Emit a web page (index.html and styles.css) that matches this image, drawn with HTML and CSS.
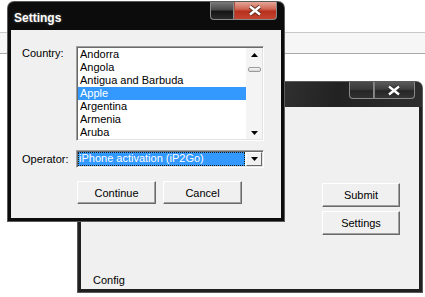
FILE: index.html
```html
<!DOCTYPE html>
<html lang="en">
<head>
  <meta charset="UTF-8">
  <title>Settings</title>
  <link rel="stylesheet" href="styles.css">
</head>
<body>
  <div class="desktop">
    <div class="band"></div>

    <!-- 后面的主窗口 -->
    <div class="window main-win">
      <div class="titlebar">
        <span class="title"></span>
        <div class="caption-btns">
          <span class="cap cap-min"></span>
          <span class="cap cap-close">
            <svg width="14" height="11" viewBox="0 0 14 11"><path d="M2 1.5 L12 9.5 M12 1.5 L2 9.5" stroke="#2a2a2a" stroke-width="4.2"/><path d="M2 1.5 L12 9.5 M12 1.5 L2 9.5" stroke="#fff" stroke-width="2.4"/></svg>
          </span>
        </div>
      </div>
      <div class="client main-client">
        <div class="side-btns">
          <button class="btn side-btn">Submit</button>
          <button class="btn side-btn">Settings</button>
        </div>
        <div class="status">Config</div>
      </div>
    </div>

    <!-- Settings 对话框 -->
    <div class="window settings-win">
      <div class="titlebar">
        <span class="title">Settings</span>
        <div class="caption-btns">
          <span class="cap cap-min"></span>
          <span class="cap cap-close red">
            <svg width="14" height="11" viewBox="0 0 14 11"><path d="M2 1.5 L12 9.5 M12 1.5 L2 9.5" stroke="#5a2a22" stroke-width="4.2"/><path d="M2 1.5 L12 9.5 M12 1.5 L2 9.5" stroke="#fff" stroke-width="2.4"/></svg>
          </span>
        </div>
      </div>
      <div class="client settings-client">
        <label class="field-label country-label">Country:</label>
        <div class="listbox">
          <ul class="list-items">
            <li>Andorra</li>
            <li>Angola</li>
            <li>Antigua and Barbuda</li>
            <li class="selected">Apple</li>
            <li>Argentina</li>
            <li>Armenia</li>
            <li>Aruba</li>
          </ul>
          <div class="scrollbar">
            <svg class="arrow" width="7" height="4" viewBox="0 0 7 4"><polygon points="0,4 7,4 3.5,0" fill="#000"/></svg>
            <span class="thumb"></span>
            <span class="track"></span>
            <svg class="arrow" width="7" height="4" viewBox="0 0 7 4"><polygon points="0,0 7,0 3.5,4" fill="#000"/></svg>
          </div>
        </div>

        <label class="field-label">Operator:</label>
        <div class="combo">
          <span class="combo-value">iPhone activation (iP2Go)</span>
          <span class="combo-drop">
            <svg width="7" height="4" viewBox="0 0 7 4"><polygon points="0,0 7,0 3.5,4" fill="#000"/></svg>
          </span>
        </div>

        <div class="actions">
          <button class="btn">Continue</button>
          <button class="btn">Cancel</button>
        </div>
      </div>
    </div>
  </div>
</body>
</html>
```

FILE: styles.css
```css
*{
  box-sizing: border-box;
}
body{
  margin: 0;
  background: #fff;
  font-family: "Liberation Sans", Arial, sans-serif;
  font-size: 11px;
  color: #000;
}
.desktop{
  position: relative;
  width: 425px;
  height: 297px;
  overflow: hidden;
}
.band{
  margin-top: 32px;
  height: 22px;
  background: #f6f6f6;
  border-top: 1px solid #c9c9c9;
  border-bottom: 1px solid #a9a9a9;
}

/* 窗口 */
.window{
  position: absolute;
  display: flex;
  flex-direction: column;
  background: #0c0c0c;
  padding: 0 3px 3px;
  border-radius: 6px 6px 0 0;
  box-shadow: 0 0 0 1px #5a5a5a;
}
.settings-win{
  left: 8px;
  top: 2px;
  width: 276px;
  height: 219px;
}
.main-win{
  left: 78px;
  top: 82px;
  width: 344px;
  height: 210px;
  background: #202020;
}
.titlebar{
  display: flex;
  justify-content: space-between;
  align-items: flex-start;
  height: 28px;
  flex: none;
}
.main-win .titlebar{
  height: 25px;
  margin: 0 -3px;
  padding: 0 3px;
  border-radius: 6px 6px 0 0;
  background: linear-gradient(100deg, #2a2a2a 0%, #303030 20%, #1f1f1f 24%, #2c2c2c 34%, #383838 40%, #262626 46%, #2f2f2f 60%, #222 75%, #2d2d2d 100%);
}
.title{
  padding: 9px 0 0 3px;
  color: #fff;
  font-weight: bold;
  font-size: 12px;
  line-height: 14px;
  text-shadow: 0 0 3px rgba(255,255,255,0.35);
}
.caption-btns{
  display: flex;
  margin-right: 4px;
}
.cap{
  display: flex;
  align-items: center;
  justify-content: center;
  height: 18px;
  border: 1px solid #8a8a8a;
  border-top: none;
}
.cap-min{
  width: 23px;
  border-radius: 0 0 0 4px;
  border-right: none;
  background: linear-gradient(#7a7a7a 0%, #4a4a4a 45%, #151515 55%, #2a2a2a 100%);
}
.cap-close{
  width: 44px;
  border-radius: 0 0 4px 0;
  background: linear-gradient(#5a5a5a 0%, #3e3e3e 45%, #262626 55%, #353535 100%);
  box-shadow: inset 1px 0 0 #7a7a7a;
}
.cap-close.red{
  background: linear-gradient(#e4a597 0%, #d06a58 40%, #b8301d 55%, #c44431 100%);
  box-shadow: inset 1px 0 0 #a05040;
}
.main-win .cap{
  height: 17px;
}
.main-win .cap-min{
  width: 24px;
  background: linear-gradient(#4a4a4a 0%, #3a3a3a 45%, #262626 55%, #303030 100%);
}
.main-win .cap-close{
  width: 42px;
}

.client{
  flex: 1;
  background: #f0f0f0;
}

/* Settings 内容 */
.settings-client{
  display: grid;
  grid-template-columns: 54px 188px;
  grid-template-rows: 95px 18px 23px;
  row-gap: 9px;
  padding: 16px 0 0 11px;
  align-content: start;
}
.field-label{
  align-self: center;
  line-height: 13px;
}
.country-label{
  align-self: start;
  padding-top: 1px;
}
.listbox{
  display: flex;
  background: #fff;
  border: 1px solid;
  border-color: #a0a0a0 #fff #fff #a0a0a0;
  box-shadow: inset 1px 1px 0 #696969, inset -1px -1px 0 #e3e3e3;
  padding: 1px;
}
.list-items{
  flex: 1;
  margin: 0;
  padding: 0;
  list-style: none;
}
.list-items li{
  height: 13px;
  line-height: 13px;
  padding-left: 2px;
  white-space: nowrap;
}
.list-items li.selected{
  background: #3399ff;
  color: #fff;
}
.scrollbar{
  display: flex;
  flex-direction: column;
  align-items: center;
  width: 16px;
  padding: 5px 0 4px;
  background: #f4f4f4;
}
.thumb{
  width: 13px;
  height: 5px;
  margin-top: 10px;
  border: 1px solid #9a9a9a;
  border-radius: 2px;
  background: linear-gradient(#fafafa, #d6d6d6);
}
.track{
  flex: 1;
}
.combo{
  display: flex;
  align-items: stretch;
  background: #fff;
  border: 1px solid;
  border-color: #a0a0a0 #fff #fff #a0a0a0;
  box-shadow: inset 1px 1px 0 #696969, inset -1px -1px 0 #e3e3e3;
  padding: 1px;
}
.combo-value{
  flex: 1;
  margin-right: 1px;
  padding-left: 1px;
  line-height: 12px;
  background: #3399ff;
  color: #fff;
  outline: 1px dotted #1a1a1a;
  outline-offset: -1px;
  white-space: nowrap;
}
.combo-drop{
  display: flex;
  align-items: center;
  justify-content: center;
  width: 16px;
  background: #f0f0f0;
  border: 1px solid;
  border-color: #fff #696969 #696969 #fff;
}
.actions{
  grid-column: 2;
  display: flex;
  gap: 7px;
  margin-top: 4px;
  margin-left: 1px;
}
.btn{
  width: 79px;
  height: 23px;
  padding: 0;
  font-family: inherit;
  font-size: 11px;
  color: #000;
  background: #f0f0f0;
  border: 1px solid;
  border-color: #fff #696969 #696969 #fff;
  box-shadow: inset -1px -1px 0 #a0a0a0;
  outline: none;
}

/* 主窗口内容 */
.main-client{
  display: flex;
  flex-direction: column;
}
.side-btns{
  display: flex;
  flex-direction: column;
  align-items: flex-end;
  gap: 4px;
  padding: 76px 19px 0 0;
}
.side-btn{
  width: 78px;
  height: 24px;
}
.status{
  margin-top: auto;
  padding: 0 0 2px 12px;
  line-height: 13px;
}
```
